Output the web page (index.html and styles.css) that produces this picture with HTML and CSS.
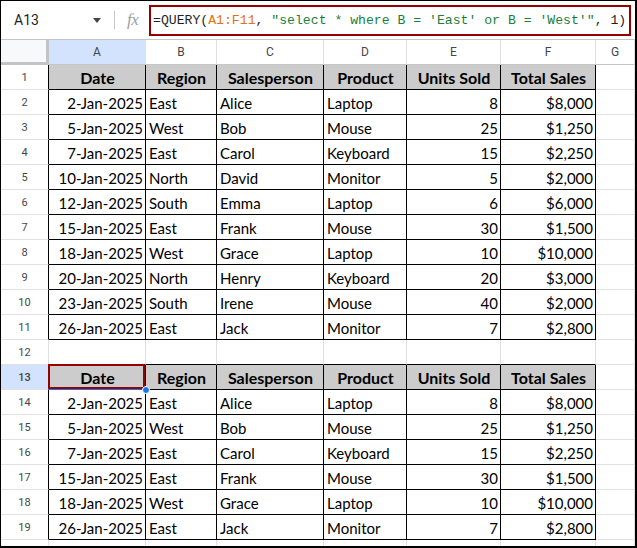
FILE: index.html
```html
<!DOCTYPE html>
<html>
<head>
<meta charset="utf-8">
<link rel="stylesheet" href="styles.css">
</head>
<body>
<div class="frame">
  <div class="fbar">
    <div class="namebox">A13</div>
    <div class="caret"></div>
    <div class="sep"></div>
    <div class="fx">fx</div>
    <div class="formula"><span>=QUERY(</span><span class="ref">A1:F11</span><span>, </span><span class="str">"select * where B = 'East' or B = 'West'"</span><span>, 1)</span></div>
  </div>
  <div class="grid">
    <div class="row colhdr">
      <div class="c corner"></div>
      <div class="c ch sel">A</div>
      <div class="c ch">B</div>
      <div class="c ch">C</div>
      <div class="c ch">D</div>
      <div class="c ch">E</div>
      <div class="c ch">F</div>
      <div class="c ch">G</div>
    </div>

    <div class="row"><div class="c rh d">1</div><div class="c t th">Date</div><div class="c t th">Region</div><div class="c t th">Salesperson</div><div class="c t th">Product</div><div class="c t th">Units Sold</div><div class="c t th">Total Sales</div><div class="c g"></div></div>
    <div class="row"><div class="c rh d">2</div><div class="c t r">2-Jan-2025</div><div class="c t">East</div><div class="c t">Alice</div><div class="c t">Laptop</div><div class="c t r">8</div><div class="c t r">$8,000</div><div class="c g"></div></div>
    <div class="row"><div class="c rh d">3</div><div class="c t r">5-Jan-2025</div><div class="c t">West</div><div class="c t">Bob</div><div class="c t">Mouse</div><div class="c t r">25</div><div class="c t r">$1,250</div><div class="c g"></div></div>
    <div class="row"><div class="c rh d">4</div><div class="c t r">7-Jan-2025</div><div class="c t">East</div><div class="c t">Carol</div><div class="c t">Keyboard</div><div class="c t r">15</div><div class="c t r">$2,250</div><div class="c g"></div></div>
    <div class="row"><div class="c rh d">5</div><div class="c t r">10-Jan-2025</div><div class="c t">North</div><div class="c t">David</div><div class="c t">Monitor</div><div class="c t r">5</div><div class="c t r">$2,000</div><div class="c g"></div></div>
    <div class="row"><div class="c rh d">6</div><div class="c t r">12-Jan-2025</div><div class="c t">South</div><div class="c t">Emma</div><div class="c t">Laptop</div><div class="c t r">6</div><div class="c t r">$6,000</div><div class="c g"></div></div>
    <div class="row"><div class="c rh d">7</div><div class="c t r">15-Jan-2025</div><div class="c t">East</div><div class="c t">Frank</div><div class="c t">Mouse</div><div class="c t r">30</div><div class="c t r">$1,500</div><div class="c g"></div></div>
    <div class="row"><div class="c rh d">8</div><div class="c t r">18-Jan-2025</div><div class="c t">West</div><div class="c t">Grace</div><div class="c t">Laptop</div><div class="c t r">10</div><div class="c t r">$10,000</div><div class="c g"></div></div>
    <div class="row"><div class="c rh d">9</div><div class="c t r">20-Jan-2025</div><div class="c t">North</div><div class="c t">Henry</div><div class="c t">Keyboard</div><div class="c t r">20</div><div class="c t r">$3,000</div><div class="c g"></div></div>
    <div class="row"><div class="c rh d">10</div><div class="c t r">23-Jan-2025</div><div class="c t">South</div><div class="c t">Irene</div><div class="c t">Mouse</div><div class="c t r">40</div><div class="c t r">$2,000</div><div class="c g"></div></div>
    <div class="row"><div class="c rh d">11</div><div class="c t r">26-Jan-2025</div><div class="c t">East</div><div class="c t">Jack</div><div class="c t">Monitor</div><div class="c t r">7</div><div class="c t r">$2,800</div><div class="c g"></div></div>
    <div class="row"><div class="c rh">12</div><div class="c e"></div><div class="c e"></div><div class="c e"></div><div class="c e"></div><div class="c e"></div><div class="c e"></div><div class="c g"></div></div>

    <div class="row"><div class="c rh d sel">13</div><div class="c t th active">Date<span class="handle"></span></div><div class="c t th">Region</div><div class="c t th">Salesperson</div><div class="c t th">Product</div><div class="c t th">Units Sold</div><div class="c t th">Total Sales</div><div class="c g"></div></div>
    <div class="row"><div class="c rh d">14</div><div class="c t r">2-Jan-2025</div><div class="c t">East</div><div class="c t">Alice</div><div class="c t">Laptop</div><div class="c t r">8</div><div class="c t r">$8,000</div><div class="c g"></div></div>
    <div class="row"><div class="c rh d">15</div><div class="c t r">5-Jan-2025</div><div class="c t">West</div><div class="c t">Bob</div><div class="c t">Mouse</div><div class="c t r">25</div><div class="c t r">$1,250</div><div class="c g"></div></div>
    <div class="row"><div class="c rh d">16</div><div class="c t r">7-Jan-2025</div><div class="c t">East</div><div class="c t">Carol</div><div class="c t">Keyboard</div><div class="c t r">15</div><div class="c t r">$2,250</div><div class="c g"></div></div>
    <div class="row"><div class="c rh d">17</div><div class="c t r">15-Jan-2025</div><div class="c t">East</div><div class="c t">Frank</div><div class="c t">Mouse</div><div class="c t r">30</div><div class="c t r">$1,500</div><div class="c g"></div></div>
    <div class="row"><div class="c rh d">18</div><div class="c t r">18-Jan-2025</div><div class="c t">West</div><div class="c t">Grace</div><div class="c t">Laptop</div><div class="c t r">10</div><div class="c t r">$10,000</div><div class="c g"></div></div>
    <div class="row"><div class="c rh d">19</div><div class="c t r">26-Jan-2025</div><div class="c t">East</div><div class="c t">Jack</div><div class="c t">Monitor</div><div class="c t r">7</div><div class="c t r">$2,800</div><div class="c g"></div></div>
    <div class="row"><div class="c rh">20</div><div class="c e"></div><div class="c e"></div><div class="c e"></div><div class="c e"></div><div class="c e"></div><div class="c e"></div><div class="c g"></div></div>
  </div>
</div>
</body>
</html>
```

FILE: styles.css
```css
* { box-sizing: border-box; }
html, body { margin: 0; padding: 0; background: #fff; }

.frame {
  width: 637px;
  height: 548px;
  border-top: 1px solid #000;
  border-left: 1px solid #000;
  border-right: 2px solid #000;
  border-bottom: 2px solid #000;
  overflow: hidden;
  background: #fff;
}

.fbar {
  height: 39px;
  display: flex;
  align-items: center;
  border-bottom: 1px solid #c4c7c5;
}
.namebox {
  width: 80px;
  padding-left: 13px;
  font: 14px "Roboto", "Liberation Sans", sans-serif;
  color: #1f1f1f;
}
.caret {
  width: 0; height: 0;
  margin-left: 12px;
  border-left: 4.5px solid transparent;
  border-right: 4.5px solid transparent;
  border-top: 5px solid #444746;
}
.sep {
  width: 1px;
  height: 18px;
  background: #c4c7c5;
  margin-left: 13px;
}
.fx {
  margin-left: 12px;
  width: 22px;
  font: italic 17px "Liberation Serif", serif;
  color: #a0a0a0;
  letter-spacing: -0.5px;
}
.formula {
  margin-left: 0;
  height: 31px;
  width: 482px;
  border: 2px solid #980000;
  display: flex;
  align-items: center;
  padding-left: 2px;
  white-space: pre;
  font: 13.15px "Liberation Mono", monospace;
  color: #1f1f1f;
}
.formula .ref { color: #e8710a; }
.formula .str { color: #188038; }

.grid { display: flex; flex-direction: column; }
.row {
  display: grid;
  grid-template-columns: 48px 97px 71px 107px 83px 94px 95px 1fr;
  height: 25px;
}
.c {
  border-right: 1px solid #e1e1e1;
  border-bottom: 1px solid #e1e1e1;
  position: relative;
  white-space: nowrap;
  overflow: visible;
}
.colhdr { height: 25px; }
.corner {
  background: #f8f9fa;
  border-right: 3px solid #c4c4c4;
  border-bottom: 3px solid #c4c4c4;
}
.ch {
  background: #fff;
  color: #444746;
  font: 12px "Roboto", "Liberation Sans", sans-serif;
  display: flex;
  align-items: center;
  justify-content: center;
  border-bottom-color: #c4c7c5;
}
.ch.sel { background: #d3e3fd; }

.rh {
  color: #444746;
  font: 11px "Roboto", "Liberation Sans", sans-serif;
  display: flex;
  align-items: center;
  justify-content: center;
  background: #fff;
}
.rh.d { border-right-color: #000; }
.rh.sel { background: #d3e3fd; font-weight: 500; }

.t {
  border-right-color: #000;
  border-bottom-color: #000;
  font: 15px "Lato", "Open Sans", sans-serif;
  color: #000;
  display: flex;
  align-items: flex-end;
  padding: 0 2px 2px 3px;
  line-height: 18px;
}
.t.r { justify-content: flex-end; }
.th {
  background: #cccccc;
  font-weight: bold;
  font-size: 16px;
  justify-content: center;
  padding-bottom: 2px;
}
.e { border-bottom-color: #000; }
.g { }

.active::after {
  content: "";
  position: absolute;
  left: -1px; top: -1px; right: 0; bottom: 0;
  border: 2px solid #980000;
  box-shadow: 0 1px 0 #1a73e8;
}
.handle {
  position: absolute;
  right: -5px;
  bottom: -5px;
  width: 8px;
  height: 8px;
  border-radius: 50%;
  background: #1a73e8;
  border: 1px solid #fff;
  z-index: 2;
}
```
